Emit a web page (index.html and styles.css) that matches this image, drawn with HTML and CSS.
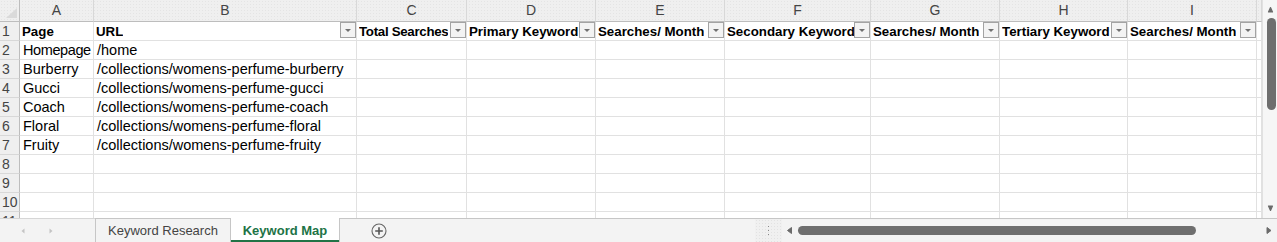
FILE: index.html
```html
<!DOCTYPE html>
<html lang="en">

<head>
  <meta charset="UTF-8">
  <title>Keyword Map</title>
  <link rel="stylesheet" href="styles.css">
</head>

<body>
  <div class="app">
    <div class="main">
      <div class="sheet">
        <div class="row colhead">
          <div class="corner"><span class="selall"></span></div>
          <div>A</div><div>B</div><div>C</div><div>D</div><div>E</div>
          <div>F</div><div>G</div><div>H</div><div>I</div><div></div>
        </div>
        <div class="row head">
          <div class="num">1</div>
          <div class="cell"><span>Page</span></div>
          <div class="cell"><span>URL</span><i class="drop"></i></div>
          <div class="cell tight"><span>Total Searches</span><i class="drop"></i></div>
          <div class="cell"><span>Primary Keyword</span><i class="drop"></i></div>
          <div class="cell"><span>Searches/ Month</span><i class="drop"></i></div>
          <div class="cell"><span>Secondary Keyword</span><i class="drop"></i></div>
          <div class="cell"><span>Searches/ Month</span><i class="drop"></i></div>
          <div class="cell"><span>Tertiary Keyword</span><i class="drop"></i></div>
          <div class="cell"><span>Searches/ Month</span><i class="drop"></i></div>
          <div class="cell"></div>
        </div>
        <div class="row">
          <div class="num">2</div>
          <div class="cell tight">Homepage</div><div class="cell">/home</div>
          <div class="cell"></div><div class="cell"></div><div class="cell"></div><div class="cell"></div>
          <div class="cell"></div><div class="cell"></div><div class="cell"></div><div class="cell"></div>
        </div>
        <div class="row">
          <div class="num">3</div>
          <div class="cell">Burberry</div><div class="cell">/collections/womens-perfume-burberry</div>
          <div class="cell"></div><div class="cell"></div><div class="cell"></div><div class="cell"></div>
          <div class="cell"></div><div class="cell"></div><div class="cell"></div><div class="cell"></div>
        </div>
        <div class="row">
          <div class="num">4</div>
          <div class="cell">Gucci</div><div class="cell">/collections/womens-perfume-gucci</div>
          <div class="cell"></div><div class="cell"></div><div class="cell"></div><div class="cell"></div>
          <div class="cell"></div><div class="cell"></div><div class="cell"></div><div class="cell"></div>
        </div>
        <div class="row">
          <div class="num">5</div>
          <div class="cell">Coach</div><div class="cell">/collections/womens-perfume-coach</div>
          <div class="cell"></div><div class="cell"></div><div class="cell"></div><div class="cell"></div>
          <div class="cell"></div><div class="cell"></div><div class="cell"></div><div class="cell"></div>
        </div>
        <div class="row">
          <div class="num">6</div>
          <div class="cell">Floral</div><div class="cell">/collections/womens-perfume-floral</div>
          <div class="cell"></div><div class="cell"></div><div class="cell"></div><div class="cell"></div>
          <div class="cell"></div><div class="cell"></div><div class="cell"></div><div class="cell"></div>
        </div>
        <div class="row">
          <div class="num">7</div>
          <div class="cell">Fruity</div><div class="cell">/collections/womens-perfume-fruity</div>
          <div class="cell"></div><div class="cell"></div><div class="cell"></div><div class="cell"></div>
          <div class="cell"></div><div class="cell"></div><div class="cell"></div><div class="cell"></div>
        </div>
        <div class="row">
          <div class="num">8</div>
          <div class="cell"></div><div class="cell"></div>
          <div class="cell"></div><div class="cell"></div><div class="cell"></div><div class="cell"></div>
          <div class="cell"></div><div class="cell"></div><div class="cell"></div><div class="cell"></div>
        </div>
        <div class="row">
          <div class="num">9</div>
          <div class="cell"></div><div class="cell"></div>
          <div class="cell"></div><div class="cell"></div><div class="cell"></div><div class="cell"></div>
          <div class="cell"></div><div class="cell"></div><div class="cell"></div><div class="cell"></div>
        </div>
        <div class="row">
          <div class="num">10</div>
          <div class="cell"></div><div class="cell"></div>
          <div class="cell"></div><div class="cell"></div><div class="cell"></div><div class="cell"></div>
          <div class="cell"></div><div class="cell"></div><div class="cell"></div><div class="cell"></div>
        </div>
        <div class="row">
          <div class="num">11</div>
          <div class="cell"></div><div class="cell"></div>
          <div class="cell"></div><div class="cell"></div><div class="cell"></div><div class="cell"></div>
          <div class="cell"></div><div class="cell"></div><div class="cell"></div><div class="cell"></div>
        </div>
      </div>

      <div class="vscroll">
        <svg class="arrow" width="15" height="18" viewBox="0 0 15 18"><path d="M5.5 12 L9.5 12 L7.5 7.5 Z" fill="#6b6b6b" stroke="#6b6b6b" stroke-width="1.2" stroke-linejoin="round"/></svg>
        <div class="track"><div class="vthumb"></div></div>
        <svg class="arrow" width="15" height="18" viewBox="0 0 15 18"><path d="M5.5 6 L9.5 6 L7.5 10.5 Z" fill="#6b6b6b" stroke="#6b6b6b" stroke-width="1.2" stroke-linejoin="round"/></svg>
      </div>
    </div>

    <div class="tabbar">
      <div class="nav">
        <svg width="10" height="23" viewBox="0 0 10 23"><path d="M6.5 9.5 L3.5 12 L6.5 14.5 Z" fill="#c4c4c4"/></svg>
        <svg width="10" height="23" viewBox="0 0 10 23"><path d="M3.5 9.5 L6.5 12 L3.5 14.5 Z" fill="#c4c4c4"/></svg>
      </div>
      <div class="tabs">
        <div class="tab">Keyword Research</div>
        <div class="tab active">Keyword Map</div>
        <div class="add">
          <svg width="16" height="16" viewBox="0 0 16 16">
            <circle cx="8" cy="8" r="7" fill="none" stroke="#666" stroke-width="1.1"/>
            <path d="M8 4.2 V11.8 M4.2 8 H11.8" stroke="#555" stroke-width="1.6"/>
          </svg>
        </div>
      </div>
      <div class="split"><span></span><span></span><span></span></div>
      <div class="hscroll">
        <svg width="16" height="23" viewBox="0 0 16 23"><path d="M9.5 8.5 L9.5 14.5 L5.5 11.5 Z" fill="#6b6b6b" stroke="#6b6b6b" stroke-width="1" stroke-linejoin="round"/></svg>
        <div class="htrack"><div class="hthumb"></div></div>
        <svg width="16" height="23" viewBox="0 0 16 23"><path d="M6 8.5 L6 14.5 L10 11.5 Z" fill="#6b6b6b" stroke="#6b6b6b" stroke-width="1" stroke-linejoin="round"/></svg>
      </div>
    </div>
  </div>
</body>

</html>
```

FILE: styles.css
```css
body {
  margin: 0;
  font-family: "Liberation Sans", Arial, sans-serif;
  background: #fff;
  color: #000;
}

.app {
  width: 1277px;
  height: 242px;
  display: flex;
  flex-direction: column;
  overflow: hidden;
}

.main {
  display: flex;
  height: 218px;
}

.sheet {
  width: 1262px;
  overflow: hidden;
}

.row {
  display: grid;
  grid-template-columns: 20px 74px 263px 110px 129px 129px 146px 129px 128px 129px 5px;
  height: 19px;
}

.row > div {
  box-sizing: border-box;
  border-right: 1px solid #e1e1e1;
  border-bottom: 1px solid #e1e1e1;
  white-space: nowrap;
  overflow: hidden;
}

/* column letters */
.colhead {
  height: 22px;
  background-color: #efefef;
  background-image: radial-gradient(#e4e4e4 0.6px, transparent 0.8px);
  background-size: 3px 3px;
}

.colhead > div {
  border-right-color: #d8d8d8;
  border-bottom-color: #bdbdbd;
  text-align: center;
  font-size: 14px;
  line-height: 21px;
  color: #444;
}

.colhead .corner {
  display: flex;
  justify-content: flex-end;
  align-items: flex-end;
  border-right-color: #bdbdbd;
  padding: 0 2px 3px 0;
}

.selall {
  width: 0;
  height: 0;
  border-left: 11px solid transparent;
  border-bottom: 10px solid #dadada;
}

/* row numbers */
.row > .num {
  background-color: #efefef;
  border-right-color: #bdbdbd;
  border-bottom-color: #d8d8d8;
  font-size: 14px;
  line-height: 19px;
  padding-left: 2px;
  color: #444;
}

.cell {
  font-size: 14.5px;
  line-height: 19px;
  padding-left: 3px;
}

.cell.tight {
  letter-spacing: -0.4px;
}

.head .cell {
  display: flex;
  justify-content: space-between;
  align-items: flex-start;
  font-weight: bold;
  font-size: 13.3px;
  padding-left: 2px;
}

.head .cell.tight {
  letter-spacing: -0.3px;
}

.head .cell span {
  overflow: hidden;
}

.drop {
  flex: none;
  position: relative;
  width: 16px;
  height: 16px;
  box-sizing: border-box;
  border: 1px solid #a3a3a3;
  background: #f3f3f3;
}

.drop::after {
  content: "";
  position: absolute;
  left: 4px;
  top: 6px;
  border-left: 3px solid transparent;
  border-right: 3px solid transparent;
  border-top: 3px solid #707070;
}

/* vertical scrollbar */
.vscroll {
  width: 15px;
  display: flex;
  flex-direction: column;
  background: #f6f6f6;
  border-left: 1px solid #e1e1e1;
  box-sizing: border-box;
}

.arrow {
  display: block;
}

.track {
  flex: 1;
  padding: 0 0 0 4px;
}

.vthumb {
  width: 9px;
  height: 92px;
  border-radius: 5px;
  background: #6e6e6e;
}

/* sheet tabs */
.tabbar {
  display: flex;
  height: 24px;
  background: #f3f3f3;
  font-size: 13px;
}

.nav {
  width: 95px;
  display: flex;
  gap: 18px;
  padding-left: 18px;
  border-top: 1px solid #d6d6d6;
  box-sizing: border-box;
}

.tabs {
  width: 660px;
  display: flex;
  border-top: 1px solid #c6c6c6;
  box-sizing: border-box;
}

.tab {
  display: flex;
  align-items: center;
  justify-content: center;
  border-left: 1px solid #c6c6c6;
  color: #444;
}

.tab:first-child {
  width: 134px;
}

.tab.active {
  width: 108px;
  background: #fff;
  color: #217346;
  font-weight: bold;
  border-right: 1px solid #c6c6c6;
  box-shadow: inset 0 -2px 0 #217346;
  margin-top: -1px;
}

.add {
  display: flex;
  align-items: center;
  padding-left: 31px;
}

.add svg {
  display: block;
}

.split {
  width: 27px;
  display: flex;
  flex-direction: column;
  align-items: center;
  justify-content: center;
  gap: 3px;
  border-top: 1px solid #c6c6c6;
  background-color: #f0f0f0;
  background-image: radial-gradient(#e2e2e2 0.6px, transparent 0.8px);
  background-size: 3px 3px;
  box-sizing: border-box;
}

.split span {
  width: 1px;
  height: 1px;
  background: #888;
}

.hscroll {
  flex: 1;
  display: flex;
  align-items: center;
  border-top: 1px solid #c6c6c6;
  box-sizing: border-box;
}

.hscroll svg {
  display: block;
  flex: none;
}

.htrack {
  flex: 1;
  height: 9px;
  margin-right: 50px;
}

.hthumb {
  width: 398px;
  height: 9px;
  border-radius: 5px;
  background: #6e6e6e;
}
```
